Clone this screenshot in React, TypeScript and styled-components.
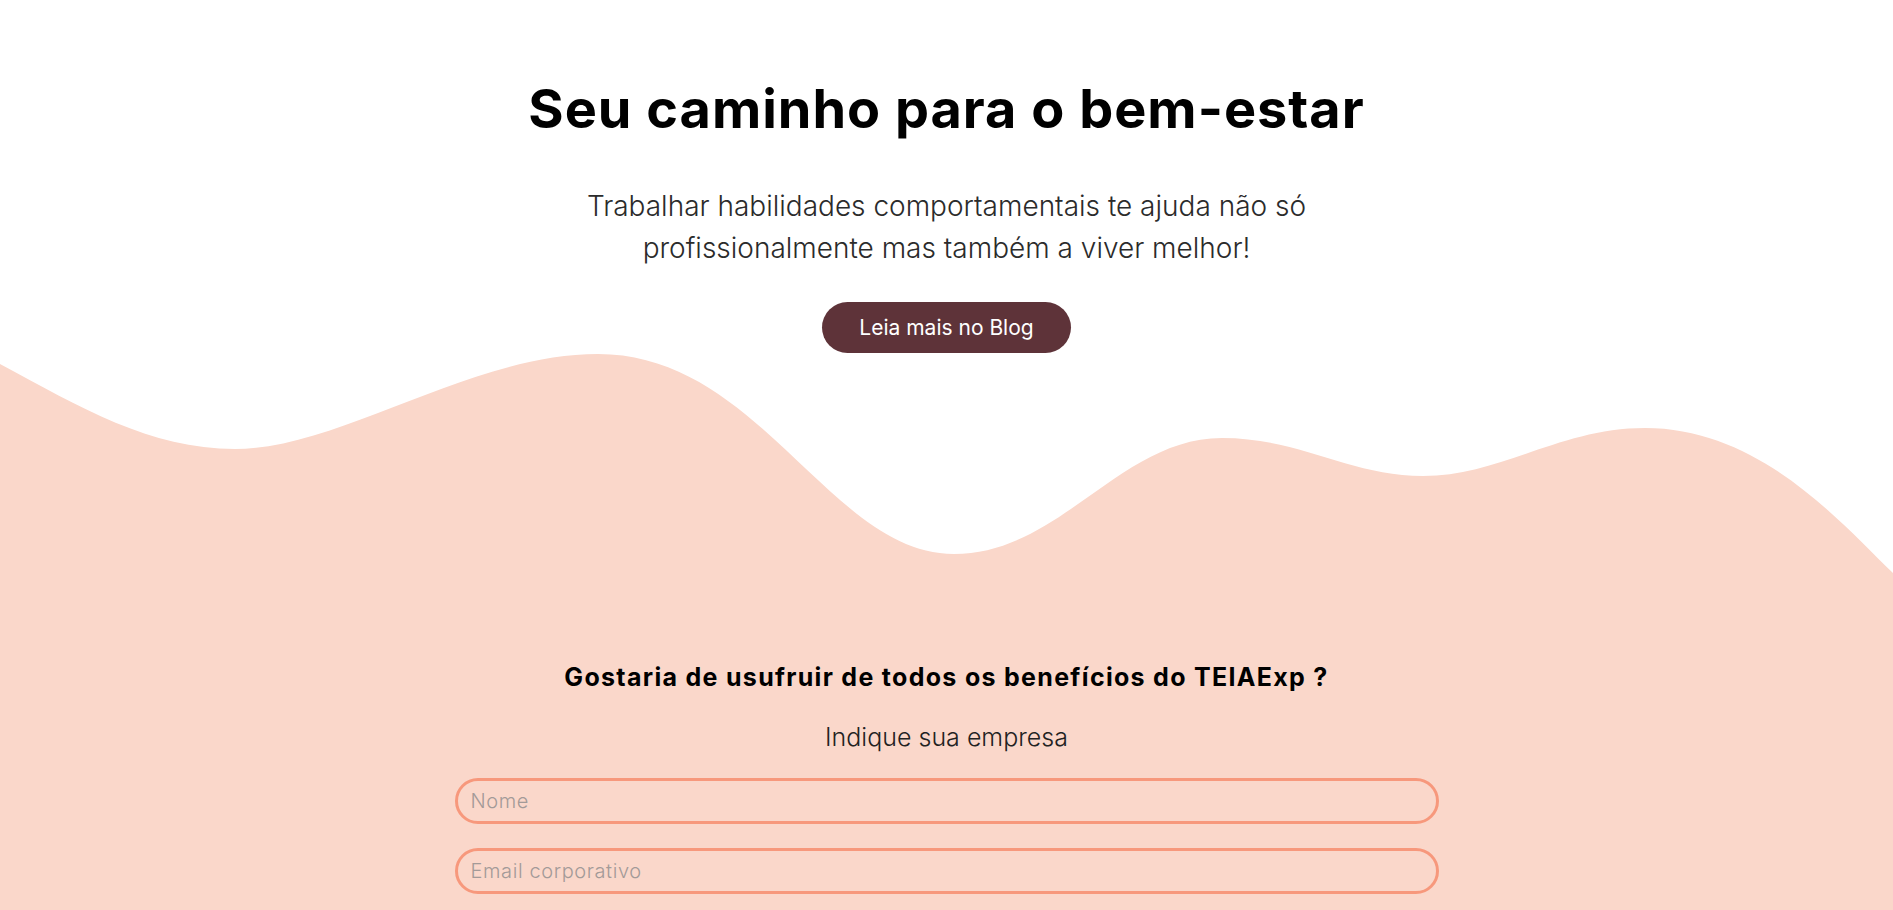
import styled, { createGlobalStyle } from 'styled-components';

const GlobalStyle = createGlobalStyle`
  * {
    box-sizing: border-box;
  }
  body {
    margin: 0;
    background: #ffffff;
    font-family: Inter, "Open Sans", sans-serif;
  }
`;

const Page = styled.main`
  display: flex;
  flex-direction: column;
  min-height: 100vh;
  overflow: hidden;
`;

const Hero = styled.section`
  display: flex;
  flex-direction: column;
  align-items: center;
  padding-top: 76px;
  text-align: center;
`;

const Title = styled.h1`
  margin: 0;
  font-size: 54px;
  font-weight: 700;
  color: #000;
  letter-spacing: 1px;
`;

const Subtitle = styled.p`
  margin: 44px 0 0;
  max-width: 800px;
  font-size: 28px;
  font-weight: 300;
  line-height: 42px;
  color: #2b2b2b;
`;

const BlogButton = styled.button`
  margin-top: 33px;
  width: 249px;
  height: 51px;
  border: none;
  border-radius: 26px;
  background: #5e3339;
  color: #fff;
  font-family: inherit;
  font-size: 21px;
  font-weight: 400;
  cursor: pointer;
`;

const Wave = styled.svg`
  display: block;
  width: 100%;
  height: 230px;
  margin-top: -1px;
`;

const FormSection = styled.section`
  flex: 1;
  display: flex;
  flex-direction: column;
  align-items: center;
  background: #fad7ca;
  padding: 80px 0 60px;
`;

const FormTitle = styled.h2`
  margin: 0;
  font-size: 25px;
  font-weight: 700;
  letter-spacing: 1.3px;
  color: #000;
`;

const FormHint = styled.p`
  margin: 30px 0 0;
  font-size: 25px;
  font-weight: 300;
  color: #222;
`;

const Form = styled.form`
  display: flex;
  flex-direction: column;
  gap: 24px;
  width: 984px;
  margin-top: 26px;
`;

const Field = styled.input`
  height: 46px;
  padding: 0 13px;
  border: 3px solid #f7987c;
  border-radius: 23px;
  background: transparent;
  font-family: inherit;
  font-size: 20px;
  font-weight: 300;
  letter-spacing: 0.6px;
  color: #333;
  outline: none;

  &::placeholder {
    color: #a39a98;
  }
`;

export default function App() {
  return (
    <>
      <GlobalStyle />
      <Page>
        <Hero>
          <Title>Seu caminho para o bem-estar</Title>
          <Subtitle>
            Trabalhar habilidades comportamentais te ajuda não só profissionalmente mas também a viver melhor!
          </Subtitle>
          <BlogButton type="button">Leia mais no Blog</BlogButton>
        </Hero>
        <Wave viewBox="0 0 1893 230" preserveAspectRatio="none">
          <path
            fill="#fad7ca"
            d="M0,12 C80,55 150,97 235,97 C340,97 470,2 598,2 C760,2 830,202 954,202 C1060,202 1120,86 1222,86 C1300,86 1350,124 1423,124 C1500,124 1560,76 1645,76 C1760,76 1840,170 1893,221 L1893,231 L0,231 Z"
          />
        </Wave>
        <FormSection>
          <FormTitle>Gostaria de usufruir de todos os benefícios do TEIAExp ?</FormTitle>
          <FormHint>Indique sua empresa</FormHint>
          <Form>
            <Field type="text" placeholder="Nome" />
            <Field type="email" placeholder="Email corporativo" />
          </Form>
        </FormSection>
      </Page>
    </>
  );
}
